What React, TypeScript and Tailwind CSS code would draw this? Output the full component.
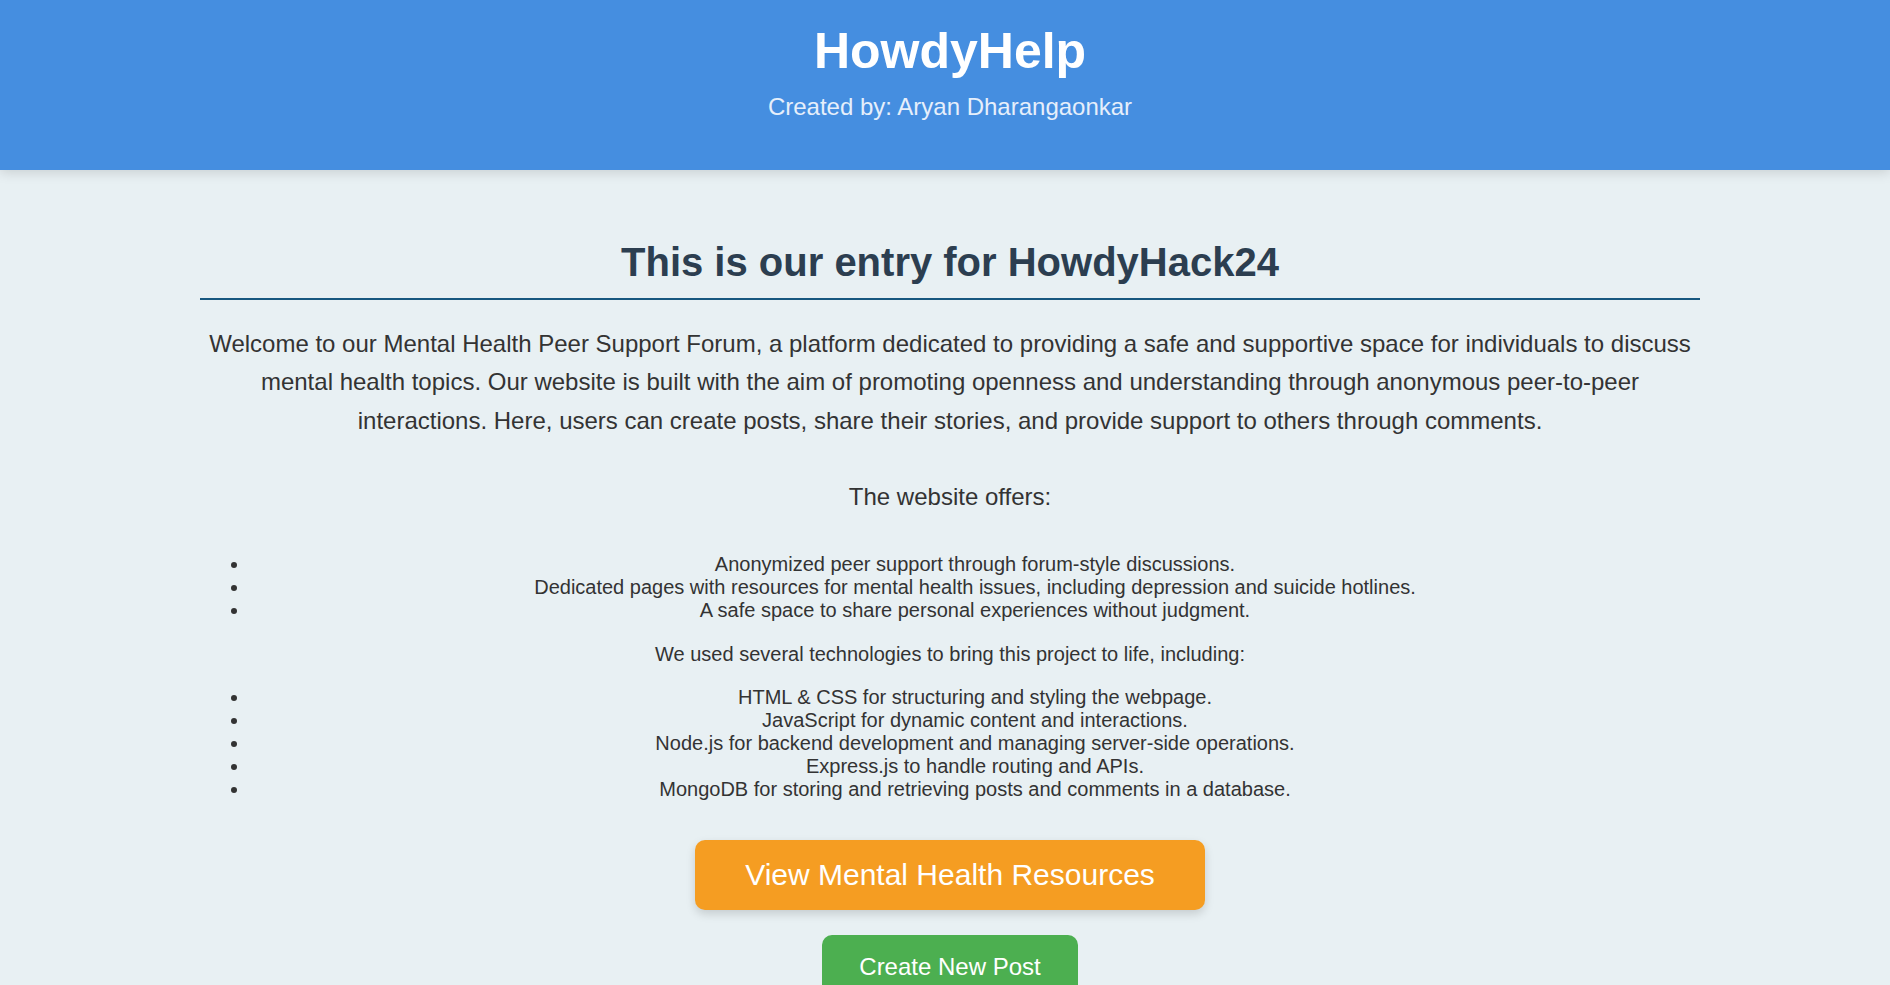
import React from "react";

export default function App() {
  const offers = [
    "Anonymized peer support through forum-style discussions.",
    "Dedicated pages with resources for mental health issues, including depression and suicide hotlines.",
    "A safe space to share personal experiences without judgment.",
  ];
  const tech = [
    "HTML & CSS for structuring and styling the webpage.",
    "JavaScript for dynamic content and interactions.",
    "Node.js for backend development and managing server-side operations.",
    "Express.js to handle routing and APIs.",
    "MongoDB for storing and retrieving posts and comments in a database.",
  ];
  return (
    <div
      className="min-h-screen bg-[#e8f0f3] text-[#333333]"
      style={{ fontFamily: '"Liberation Sans", Arial, sans-serif' }}
    >
      <header className="relative z-10 bg-[#458ee0] pl-[10px] pt-[23px] pb-[49px] text-center shadow-[0_2px_12px_rgba(0,0,0,0.15)]">
        <h1 className="text-[50px] font-bold leading-[57px] text-white">HowdyHelp</h1>
        <p className="mt-[13px] text-[24px] leading-[28px] text-[#e6effb]">
          Created by: Aryan Dharangaonkar
        </p>
      </header>

      <main className="pl-[10px] pb-[60px]">
        <div className="mx-auto w-[1500px] pt-[69px]">
          <h2 className="border-b-2 border-[#17577f] pb-[13px] text-center text-[40px] font-bold leading-[46px] text-[#2c3e50]">
            This is our entry for HowdyHack24
          </h2>
          <p className="mt-[25px] text-center text-[24px] leading-[38.4px]">
            Welcome to our Mental Health Peer Support Forum, a platform dedicated to providing a safe and
            supportive space for individuals to discuss mental health topics. Our website is built with the aim of
            promoting openness and understanding through anonymous peer-to-peer interactions. Here, users can
            create posts, share their stories, and provide support to others through comments.
          </p>
          <p className="mt-[38px] text-center text-[24px] leading-[38.4px]">The website offers:</p>
          <ul className="mt-[36px] list-disc pl-[50px] text-center text-[20px] leading-[23px]">
            {offers.map((o) => (
              <li key={o}>{o}</li>
            ))}
          </ul>
          <p className="mt-[21px] text-center text-[20px] leading-[23px]">
            We used several technologies to bring this project to life, including:
          </p>
          <ul className="mt-[20px] list-disc pl-[50px] text-center text-[20px] leading-[23px]">
            {tech.map((t) => (
              <li key={t}>{t}</li>
            ))}
          </ul>
          <div className="mt-[39px] flex flex-col items-center gap-[25px]">
            <button className="h-[70px] rounded-[10px] bg-[#f59d22] px-[50px] text-[30px] leading-[34px] text-white shadow-[0_4px_10px_rgba(0,0,0,0.15)]">
              View Mental Health Resources
            </button>
            <button className="rounded-[10px] bg-[#4caf50] px-[37.5px] py-[18.75px] text-[24px] leading-[27.6px] text-white">
              Create New Post
            </button>
          </div>
        </div>
      </main>
    </div>
  );
}
